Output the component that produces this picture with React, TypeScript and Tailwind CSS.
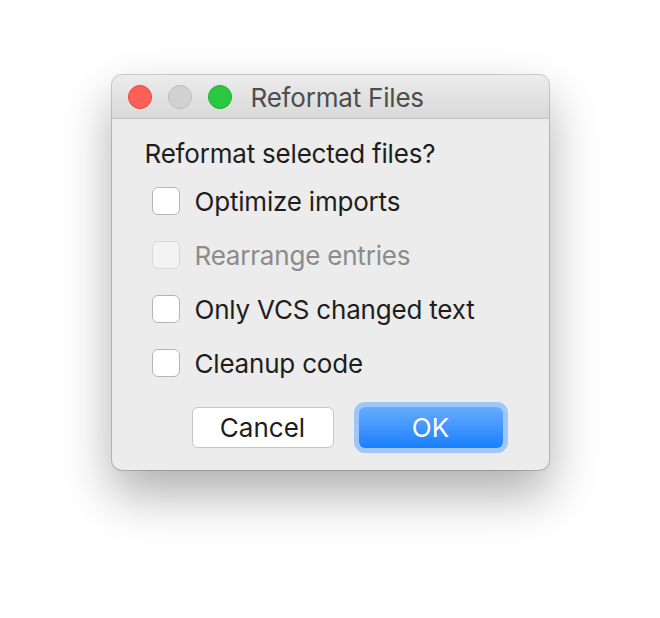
import { useState } from 'react';

const options = [
  { label: 'Optimize imports', disabled: false },
  { label: 'Rearrange entries', disabled: true },
  { label: 'Only VCS changed text', disabled: false },
  { label: 'Cleanup code', disabled: false },
];

export default function App() {
  const [checked, setChecked] = useState<boolean[]>([false, false, false, false]);

  const toggle = (i: number) => {
    setChecked(prev => prev.map((v, j) => (j === i ? !v : v)));
  };

  return (
    <div
      className="flex min-h-[618px] justify-center bg-white pt-[75px]"
      style={{ fontFamily: 'Inter, "Noto Sans", sans-serif' }}
    >
      <div className="h-fit w-[437px] overflow-hidden rounded-[10px] bg-[#ececec] shadow-[0_0_0_1px_rgba(0,0,0,0.18),0_24px_50px_rgba(0,0,0,0.32)]">
        {/* Title bar */}
        <div className="flex h-[44px] items-center border-b border-[#c4c4c4] bg-gradient-to-b from-[#ececec] to-[#d9d9d9] pl-[16px]">
          <div className="flex gap-[16px]">
            <span className="h-[24px] w-[24px] rounded-full border border-[#e2463f] bg-[#fe5f57]" />
            <span className="h-[24px] w-[24px] rounded-full border border-[#bcbcbc] bg-[#d2d2d2]" />
            <span className="h-[24px] w-[24px] rounded-full border border-[#1dad2b] bg-[#2ac840]" />
          </div>
          <span className="ml-[19px] pt-[3px] text-[26px] leading-[30px] tracking-[-0.2px] text-[#4d4d4d]">Reformat Files</span>
        </div>

        {/* Body */}
        <div className="px-[33px] pb-[22px] pt-[20px]">
          <p className="text-[26px] leading-[30px] tracking-[-0.2px] text-[#1e1e1e]">Reformat selected files?</p>

          <div className="mt-[5px] pl-[7px]">
            {options.map((opt, i) => (
              <label
                key={opt.label}
                className="flex h-[54px] items-center gap-[15px]"
                onClick={() => !opt.disabled && toggle(i)}
              >
                <span
                  className={
                    opt.disabled
                      ? 'h-[28px] w-[28px] rounded-[6px] border border-[#d8d8d8] bg-[#f3f3f3]'
                      : 'h-[28px] w-[28px] rounded-[6px] border border-[#b5b5b5] bg-white'
                  }
                >
                  {checked[i] && (
                    <svg viewBox="0 0 28 28" className="h-full w-full">
                      <path d="M7 14l5 5 9-11" fill="none" stroke="#1e1e1e" strokeWidth="2.5" />
                    </svg>
                  )}
                </span>
                <span
                  className={
                    opt.disabled
                      ? 'pt-[2px] text-[26px] leading-[30px] tracking-[-0.2px] text-[#8b8b8b]'
                      : 'pt-[2px] text-[26px] leading-[30px] tracking-[-0.2px] text-[#1e1e1e]'
                  }
                >
                  {opt.label}
                </span>
              </label>
            ))}
          </div>

          <div className="mt-[17px] flex justify-end gap-[25px] pr-[13px]">
            <button className="h-[41px] w-[142px] rounded-[6px] border border-[#c6c6c6] bg-white pt-[1px] text-[26px] leading-[30px] text-[#1e1e1e]">
              Cancel
            </button>
            <button className="h-[41px] w-[144px] rounded-[6px] bg-gradient-to-b from-[#63acff] to-[#157efb] pt-[1px] text-[26px] leading-[30px] text-white ring-[5px] ring-[#9fc6f6]">
              OK
            </button>
          </div>
        </div>
      </div>
    </div>
  );
}
